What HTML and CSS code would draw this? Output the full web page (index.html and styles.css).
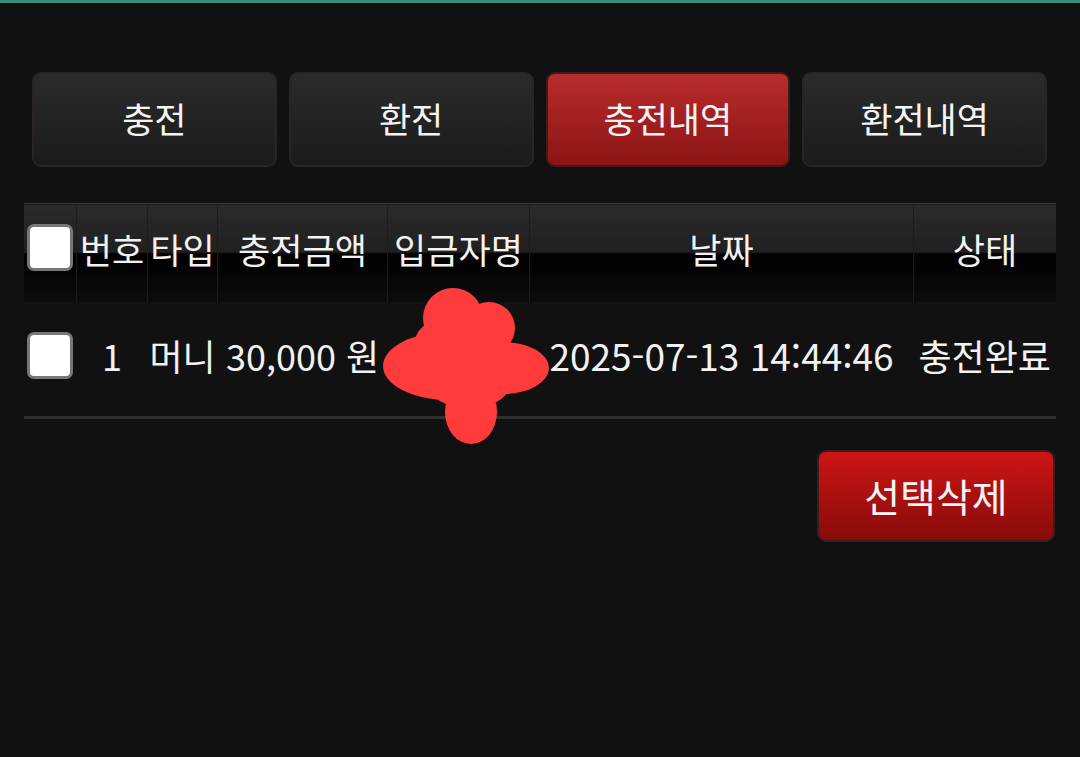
FILE: index.html
```html
<!DOCTYPE html>
<html lang="ko">
<head>
  <meta charset="UTF-8">
  <title>충전내역</title>
  <link rel="stylesheet" href="styles.css">
</head>
<body>

  <div class="topline"></div>

  <div class="tabs">
    <a class="tab">충전</a>
    <a class="tab">환전</a>
    <a class="tab active">충전내역</a>
    <a class="tab">환전내역</a>
  </div>

  <table class="history">
    <thead>
      <tr>
        <th class="c-check"><span class="box"></span></th>
        <th class="c-no">번호</th>
        <th class="c-type">타입</th>
        <th class="c-amount">충전금액</th>
        <th class="c-name">입금자명</th>
        <th class="c-date">날짜</th>
        <th class="c-state">상태</th>
      </tr>
    </thead>
    <tbody>
      <tr>
        <td class="c-check"><span class="box"></span></td>
        <td>1</td>
        <td>머니</td>
        <td class="c-amount">30,000 원</td>
        <td class="c-name">
          <!-- redacted -->
          <svg class="scribble" width="170" height="156" viewBox="0 0 170 156">
            <g fill="#ff3b3b">
              <circle cx="72" cy="30" r="30"/>
              <circle cx="108" cy="40" r="26"/>
              <ellipse cx="80" cy="54" rx="46" ry="28"/>
              <ellipse cx="68" cy="78" rx="66" ry="34"/>
              <ellipse cx="122" cy="80" rx="46" ry="26"/>
              <ellipse cx="88" cy="98" rx="40" ry="22"/>
              <ellipse cx="90" cy="124" rx="26" ry="32"/>
            </g>
          </svg>
        </td>
        <td class="date">2025-07-13 14:44:46</td>
        <td>충전완료</td>
      </tr>
    </tbody>
  </table>

  <div class="actions">
    <button class="btn-delete">선택삭제</button>
  </div>

</body>
</html>
```

FILE: styles.css
```css
body {
  margin: 0;
  background-color: #111111;
  color: #f2f2f2;
  font-family: "Noto Sans CJK KR", "Noto Sans", sans-serif;
}

.topline {
  height: 3px;
  background-color: #3c8a78;
}

.tabs {
  display: flex;
  gap: 12px;
  padding: 69px 33px 0 32px;
}

.tab {
  flex: 1;
  height: 86px;
  padding-bottom: 5px;
  display: flex;
  align-items: center;
  justify-content: center;
  font-size: 35px;
  color: #f4f4f4;
  border: 2px solid #2c2424;
  border-radius: 9px;
  background: linear-gradient(#2b2b2b, #1b1b1b);
}

.tab.active {
  background: linear-gradient(#b82c2c, #8c1414);
  border-color: #3a1c1c;
}

.history {
  margin: 36px 24px 0 24px;
  width: 1032px;
  border-collapse: collapse;
  table-layout: fixed;
  font-size: 36px;
}

.history th {
  height: 88px;
  padding: 0 0 10px 0;
  font-size: 35px;
  font-weight: normal;
  color: #f2f2f2;
  border-left: 1px solid #1c1c1c;
  border-top: 1px solid #3a3a3a;
  background: linear-gradient(#2a2a2a 0%, #202020 49%, #000000 50%, #0c0c0c 100%);
}

.history th:first-child {
  border-left: none;
}

.history td {
  height: 106px;
  padding: 0 0 8px 0;
  text-align: center;
  white-space: nowrap;
  border-bottom: 3px solid #2f2f2f;
}

.c-check { width: 52px; }
.c-no { width: 70px; }
.c-type { width: 69px; }
.c-amount { width: 169px; }
.c-name { width: 141px; position: relative; }
.c-date { width: 383px; }
.c-state { width: 142px; }

.history .c-check {
  text-align: left;
  vertical-align: top;
}

.history th .box {
  margin-top: 20px;
}

.history td .box {
  margin-top: 30px;
}

.history td.date {
  font-size: 37px;
}

.box {
  display: inline-block;
  width: 40px;
  height: 41px;
  margin-left: 3px;
  background-color: #ffffff;
  border: 3px solid #777777;
  border-radius: 7px;
}

.scribble {
  position: absolute;
  left: -7px;
  top: -14px;
}

.actions {
  display: flex;
  justify-content: flex-end;
  padding: 31px 25px 0 0;
}

.btn-delete {
  width: 238px;
  height: 92px;
  padding-bottom: 4px;
  font-family: inherit;
  font-size: 39px;
  color: #f4f4f4;
  border: 2px solid #3a1e1e;
  border-radius: 9px;
  background: linear-gradient(#cc1616, #880a0a);
}
```
